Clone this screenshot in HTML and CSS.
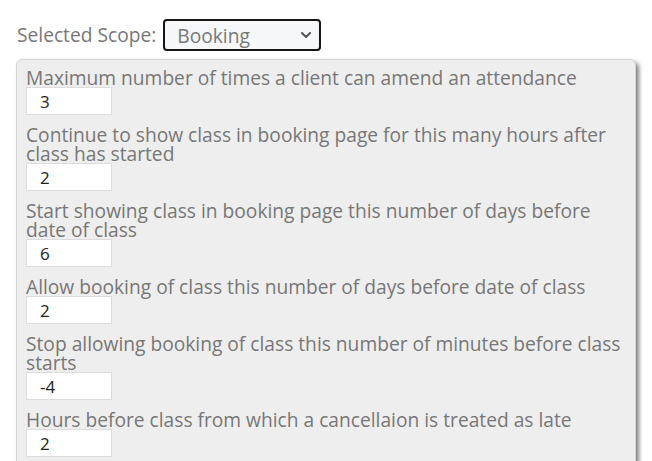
FILE: index.html
```html
<!DOCTYPE html>
<html lang="en">
<head>
<meta charset="utf-8">
<title>Booking scope settings</title>
<link rel="stylesheet" href="styles.css">
</head>
<body>
<div class="scope-row">
  <label class="scope-label" for="scope">Selected Scope:</label>
  <span class="select-wrap">
    <select id="scope" class="scope-select">
      <option>Booking</option>
    </select>
    <svg class="chevron" width="10" height="6" viewBox="0 0 10 6"><path d="M1 1l4 4 4-4" fill="none" stroke="#555" stroke-width="2" stroke-linecap="round" stroke-linejoin="round"/></svg>
  </span>
</div>
<div class="panel">
  <div class="field">
    <label class="field-label">Maximum number of times a client can amend an attendance</label>
    <input class="field-input" type="text" value="3">
  </div>
  <div class="field">
    <label class="field-label">Continue to show class in booking page for this many hours after class has started</label>
    <input class="field-input" type="text" value="2">
  </div>
  <div class="field">
    <label class="field-label">Start showing class in booking page this number of days before date of class</label>
    <input class="field-input" type="text" value="6">
  </div>
  <div class="field">
    <label class="field-label">Allow booking of class this number of days before date of class</label>
    <input class="field-input" type="text" value="2">
  </div>
  <div class="field">
    <label class="field-label">Stop allowing booking of class this number of minutes before class starts</label>
    <input class="field-input" type="text" value="-4">
  </div>
  <div class="field">
    <label class="field-label">Hours before class from which a cancellaion is treated as late</label>
    <input class="field-input" type="text" value="2">
  </div>
</div>
</body>
</html>
```
FILE: styles.css
```css
html, body {
  margin: 0;
  background: #ffffff;
}
body {
  padding: 19px 16px 0 16px;
  font-family: "Open Sans", "Noto Sans", sans-serif;
  font-size: 19.2px;
  color: #777777;
  overflow: hidden;
}
.scope-row {
  display: flex;
  align-items: center;
  gap: 7px;
  height: 32px;
}
.scope-label {
  padding-left: 1px;
  line-height: 32px;
}
.select-wrap {
  position: relative;
  display: inline-flex;
}
.scope-select {
  appearance: none;
  -webkit-appearance: none;
  width: 158px;
  height: 32px;
  margin: 0;
  padding: 0 0 0 12px;
  border: 2px solid #151515;
  border-radius: 4px;
  background: #f6f7f9;
  font-family: inherit;
  font-size: 19.2px;
  color: #777777;
  outline: none;
}
.chevron {
  position: absolute;
  right: 10px;
  top: 13px;
  pointer-events: none;
}
.panel {
  margin-top: 8px;
  width: 620px;
  box-sizing: border-box;
  min-height: 420px;
  padding: 8px 10px 10px 9px;
  background: #eeeeee;
  border: 1px solid #d6d6d6;
  border-radius: 6px;
  box-shadow: 3px 3px 4px rgba(0, 0, 0, 0.5);
}
.field {
  display: flex;
  flex-direction: column;
  align-items: flex-start;
  margin-bottom: 10px;
}
.field-label {
  line-height: 19px;
}
.field-input {
  box-sizing: border-box;
  width: 86px;
  height: 28px;
  margin: 0;
  padding: 0 0 0 13px;
  border: 1px solid #dcdcdc;
  background: #ffffff;
  font-family: "Open Sans", "Noto Sans", sans-serif;
  font-size: 17px;
  color: #222222;
  outline: none;
}
```
